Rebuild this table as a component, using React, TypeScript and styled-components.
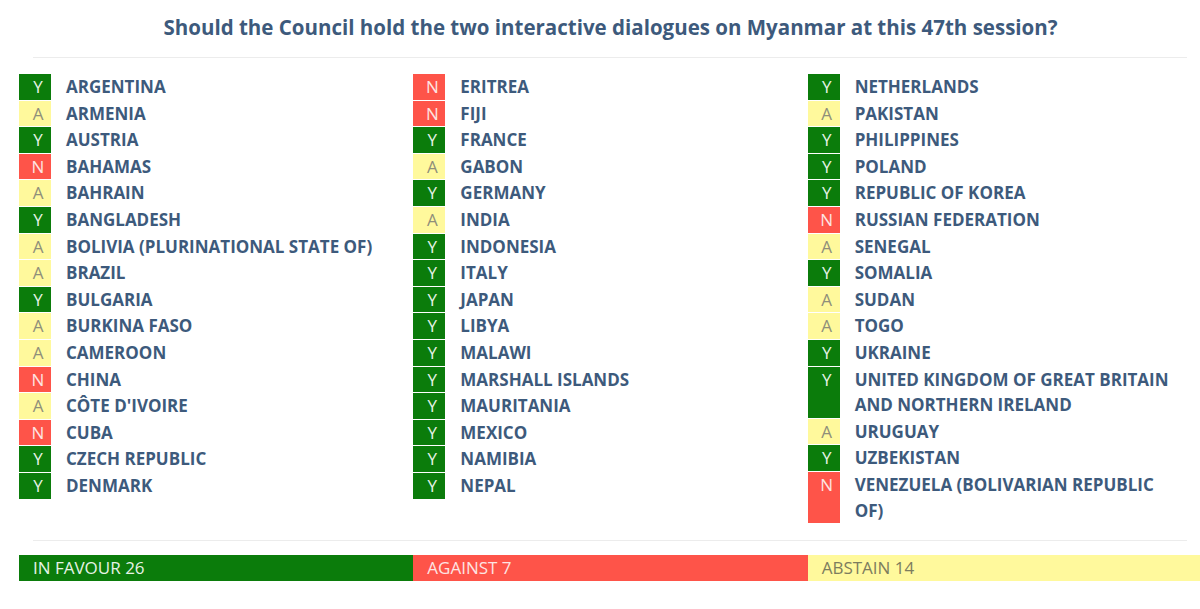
import React from "react";
import styled, { createGlobalStyle } from "styled-components";

type Vote = "Y" | "N" | "A";

const GlobalStyle = createGlobalStyle`
  html, body {
    margin: 0;
    padding: 0;
    background: #ffffff;
    overflow: hidden;
  }
  body {
    font-family: "Open Sans", "Liberation Sans", sans-serif;
  }
`;

const COLORS: Record<Vote, { bg: string; fg: string }> = {
  Y: { bg: "#0b7c0b", fg: "#e6f3e6" },
  N: { bg: "#fe5449", fg: "#fde4e2" },
  A: { bg: "#fff99c", fg: "#8f8f7a" },
};

const columns: [Vote, string][][] = [
  [
    ["Y", "ARGENTINA"],
    ["A", "ARMENIA"],
    ["Y", "AUSTRIA"],
    ["N", "BAHAMAS"],
    ["A", "BAHRAIN"],
    ["Y", "BANGLADESH"],
    ["A", "BOLIVIA (PLURINATIONAL STATE OF)"],
    ["A", "BRAZIL"],
    ["Y", "BULGARIA"],
    ["A", "BURKINA FASO"],
    ["A", "CAMEROON"],
    ["N", "CHINA"],
    ["A", "CÔTE D'IVOIRE"],
    ["N", "CUBA"],
    ["Y", "CZECH REPUBLIC"],
    ["Y", "DENMARK"],
  ],
  [
    ["N", "ERITREA"],
    ["N", "FIJI"],
    ["Y", "FRANCE"],
    ["A", "GABON"],
    ["Y", "GERMANY"],
    ["A", "INDIA"],
    ["Y", "INDONESIA"],
    ["Y", "ITALY"],
    ["Y", "JAPAN"],
    ["Y", "LIBYA"],
    ["Y", "MALAWI"],
    ["Y", "MARSHALL ISLANDS"],
    ["Y", "MAURITANIA"],
    ["Y", "MEXICO"],
    ["Y", "NAMIBIA"],
    ["Y", "NEPAL"],
  ],
  [
    ["Y", "NETHERLANDS"],
    ["A", "PAKISTAN"],
    ["Y", "PHILIPPINES"],
    ["Y", "POLAND"],
    ["Y", "REPUBLIC OF KOREA"],
    ["N", "RUSSIAN FEDERATION"],
    ["A", "SENEGAL"],
    ["Y", "SOMALIA"],
    ["A", "SUDAN"],
    ["A", "TOGO"],
    ["Y", "UKRAINE"],
    ["Y", "UNITED KINGDOM OF GREAT BRITAIN AND NORTHERN IRELAND"],
    ["A", "URUGUAY"],
    ["Y", "UZBEKISTAN"],
    ["N", "VENEZUELA (BOLIVARIAN REPUBLIC OF)"],
  ],
];

const Page = styled.div`
  width: 1183px;
  padding: 14px 0 0 19px;
`;

const Title = styled.h1`
  margin: 0;
  text-align: center;
  font-size: 20.5px;
  line-height: 26px;
  font-weight: 700;
  color: #3d5a7c;
`;

const Rule = styled.hr<{ $top: number }>`
  border: 0;
  height: 1px;
  background: #ececec;
  margin: ${(p) => p.$top}px 15px 0 14px;
`;

const Grid = styled.div`
  display: grid;
  grid-template-columns: repeat(3, 1fr);
  margin-top: 16px;
`;

const Column = styled.div`
  display: flex;
  flex-direction: column;
  padding-right: 22px;
`;

const Row = styled.div`
  display: flex;
  align-items: stretch;
  margin-bottom: 1px;
`;

const Badge = styled.div<{ $vote: Vote }>`
  flex: 0 0 32px;
  box-sizing: border-box;
  padding-left: 6px;
  text-align: center;
  font-size: 17px;
  line-height: 25.6px;
  font-weight: 400;
  background: ${(p) => COLORS[p.$vote].bg};
  color: ${(p) => COLORS[p.$vote].fg};
`;

const Name = styled.div`
  margin-left: 15px;
  font-size: 17px;
  line-height: 25.6px;
  font-weight: 700;
  color: #3d5a7c;
`;

const Totals = styled.div`
  display: grid;
  grid-template-columns: repeat(3, 1fr);
  margin-top: 14px;
`;

const Segment = styled.div<{ $vote: Vote }>`
  height: 26px;
  padding-left: 14px;
  font-size: 17px;
  line-height: 26px;
  background: ${(p) => COLORS[p.$vote].bg};
  color: ${(p) => (p.$vote === "A" ? "#7d7d5e" : COLORS[p.$vote].fg)};
`;

export default function App() {
  return (
    <>
      <GlobalStyle />
      <Page>
        <Title>
          Should the Council hold the two interactive dialogues on Myanmar at
          this 47th session?
        </Title>
        <Rule $top={17} />
        <Grid>
          {columns.map((col, i) => (
            <Column key={i}>
              {col.map(([v, name]) => (
                <Row key={name}>
                  <Badge $vote={v}>{v}</Badge>
                  <Name>{name}</Name>
                </Row>
              ))}
            </Column>
          ))}
        </Grid>
        <Rule $top={16} />
        <Totals>
          <Segment $vote="Y">IN FAVOUR 26</Segment>
          <Segment $vote="N">AGAINST 7</Segment>
          <Segment $vote="A">ABSTAIN 14</Segment>
        </Totals>
      </Page>
    </>
  );
}
